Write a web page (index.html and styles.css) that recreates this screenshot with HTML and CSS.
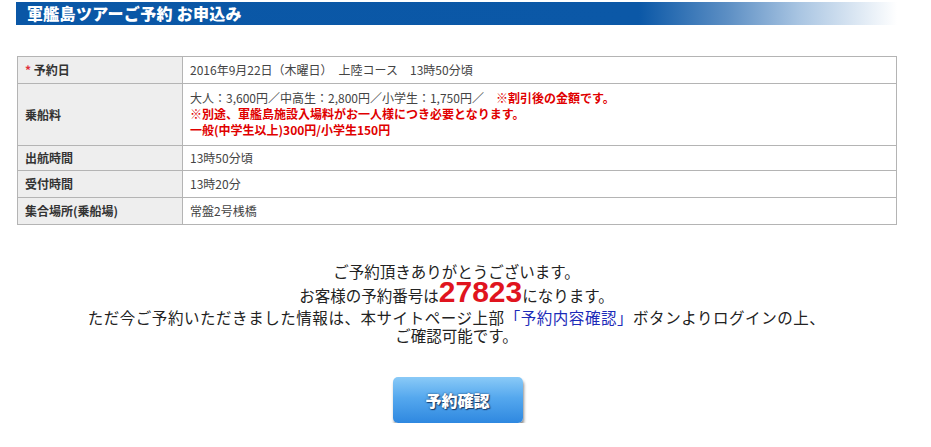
FILE: index.html
```html
<!DOCTYPE html>
<html lang="ja">
<head>
<meta charset="utf-8">
<title>軍艦島ツアーご予約 お申込み</title>
<link rel="stylesheet" href="styles.css">
</head>
<body>
<div class="page">
  <h1 class="heading">軍艦島ツアーご予約 お申込み</h1>
  <table class="info">
    <tr>
      <th><span class="req">*</span> 予約日</th>
      <td>2016年9月22日（木曜日）　上陸コース　13時50分頃</td>
    </tr>
    <tr class="tall">
      <th>乗船料</th>
      <td>大人：3,600円／中高生：2,800円／小学生：1,750円／　<span class="warn">※割引後の金額です。</span><br>
        <span class="warn">※別途、軍艦島施設入場料がお一人様につき必要となります。<br>一般(中学生以上)300円/小学生150円</span></td>
    </tr>
    <tr class="short">
      <th>出航時間</th>
      <td>13時50分頃</td>
    </tr>
    <tr>
      <th>受付時間</th>
      <td>13時20分</td>
    </tr>
    <tr>
      <th>集合場所(乗船場)</th>
      <td>常盤2号桟橋</td>
    </tr>
  </table>
  <div class="thanks">
    <p class="l1">ご予約頂きありがとうございます。</p>
    <p class="l2">お客様の予約番号は<span class="num">27823</span>になります。</p>
    <p class="l3">ただ今ご予約いただきました情報は、本サイトページ上部<a class="link" href="#">「予約内容確認」</a>ボタンよりログインの上、</p>
    <p class="l4">ご確認可能です。</p>
  </div>
  <div class="actions">
    <a class="btn" href="#">予約確認</a>
  </div>
</div>
</body>
</html>
```

FILE: styles.css
```css
html, body {
  margin: 0;
  padding: 0;
  background: #fff;
}
body {
  font-family: "Noto Sans CJK JP", "Noto Sans", sans-serif;
  color: #333;
}
.page {
  padding: 2px 0 0 16px;
  width: 881px;
}
.heading {
  margin: 0;
  width: 890px;
  height: 23px;
  line-height: 23px;
  padding-left: 11px;
  box-sizing: border-box;
  font-size: 16px;
  letter-spacing: 0.3px;
  font-weight: 900;
  color: #fff;
  background: linear-gradient(to right, #0a57a6 0%, #0b58a7 70%, #5d8fc4 80%, #a9c5e2 88%, #ffffff 99%);
}
.info {
  margin-top: 31px;
  margin-left: 1px;
  width: 880px;
  border-collapse: collapse;
  font-size: 12px;
  line-height: 16px;
  border: 1px solid #aaa;
}
.info th, .info td {
  border: 1px solid #b4b4b4;
  padding: 5px 7px;
  text-align: left;
  vertical-align: middle;
}
.info th {
  width: 150px;
  background: #eeeeee;
  font-weight: bold;
  color: #333;
}
.info td {
  color: #444;
  font-weight: normal;
}
.info .tall td {
  padding-top: 6px;
  padding-bottom: 7px;
}
.info .short th, .info .short td {
  padding-top: 4px;
  padding-bottom: 4px;
}
.req {
  color: #e0303a;
}
.warn {
  color: #e00000;
  font-weight: bold;
}
.thanks {
  margin-top: 37px;
  text-align: center;
  font-size: 15.5px;
  color: #222;
}
.thanks p {
  margin: 0;
  white-space: nowrap;
}
.l1 {
  line-height: 18px;
}
.l2 {
  line-height: 23px;
}
.l3 {
  line-height: 20px;
  letter-spacing: 0.55px;
}
.l4 {
  line-height: 16px;
}
.num {
  font-family: "Liberation Sans", Arial, sans-serif;
  font-weight: bold;
  font-size: 30px;
  line-height: 23px;
  color: #e0141e;
}
.link {
  color: #1c2bb8;
  text-decoration: none;
}
.actions {
  margin-top: 34px;
  display: flex;
  justify-content: center;
  padding-left: 2px;
}
.btn {
  display: block;
  width: 130px;
  height: 46px;
  line-height: 46px;
  text-align: center;
  border-radius: 5px;
  background: linear-gradient(to bottom, #8acaf7 0%, #55a8ee 45%, #2f88e0 100%);
  box-shadow: 1px 3px 3px rgba(0, 0, 0, 0.45);
  color: #fff;
  font-size: 16px;
  font-weight: 900;
  text-decoration: none;
  text-shadow: 1px 1px 1px #1a3a66, 0 0 2px #1a3a66;
}
```
